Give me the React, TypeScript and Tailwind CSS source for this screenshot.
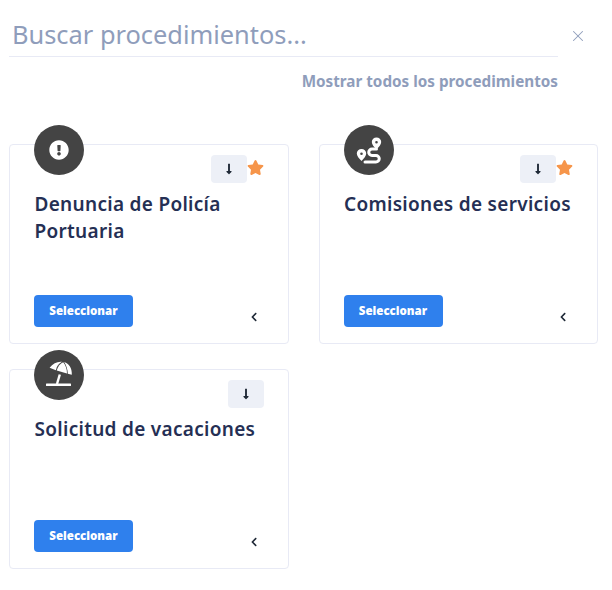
import { FaExclamationCircle, FaLongArrowAltDown, FaStar, FaChevronLeft } from 'react-icons/fa';
import { X } from 'lucide-react';
import type { ReactNode } from 'react';

type Procedure = { id: number; title: ReactNode; icon: ReactNode; favorite: boolean };

function RouteIcon() {
  return (
    <svg viewBox="-1 0 30 34" className="h-[34px] w-[30px]" fill="none">
      <path d="M21.5 16H17a3.2 3.2 0 0 0 0 6.5H21a3.2 3.2 0 0 1 0 6.5H10" stroke="white" strokeWidth="3" strokeLinecap="round" />
      <path fillRule="evenodd" fill="white" d="M6.5 28C4 25.5 1.8 23 1.8 20.6a4.7 4.7 0 0 1 9.4 0C11.2 23 9 25.5 6.5 28ZM6.5 19.4a1.3 1.3 0 1 0 0 2.6a1.3 1.3 0 0 0 0-2.6Z" />
      <path fillRule="evenodd" fill="white" d="M21.5 16.5C19 14 16.8 11.5 16.8 9.1a4.7 4.7 0 0 1 9.4 0C26.2 11.5 24 14 21.5 16.5ZM21.5 7.9a1.3 1.3 0 1 0 0 2.6a1.3 1.3 0 0 0 0-2.6Z" />
    </svg>
  );
}

function BeachIcon() {
  return (
    <svg viewBox="0 3 34 34" className="h-[34px] w-[34px]" fill="white">
      <rect x="4" y="28.5" width="25" height="2.6" rx="0.5" />
      <path d="M15 29L17.8 19.5" stroke="white" strokeWidth="2.4" fill="none" />
      <path d="M7.6 12.8C10.8 8.4 15.8 6.2 20 6.8C16.8 8.4 14.8 11 13.9 15.3Z" />
      <path d="M14.7 15.5C15.8 11.4 18.2 8.2 21.2 7.2C23.6 10 25 13.8 25 18.4Z" />
      <path d="M22.2 6.9C27 8.2 30.2 13.4 29.8 19.8L25.8 18.7C25.8 14.6 24.4 10.4 22.2 6.9Z" />
    </svg>
  );
}

const procedures: Procedure[] = [
  { id: 1, title: <>Denuncia de Policía<br />Portuaria</>, icon: <FaExclamationCircle className="h-[20px] w-[20px]" />, favorite: true },
  { id: 2, title: 'Comisiones de servicios', icon: <RouteIcon />, favorite: true },
  { id: 3, title: 'Solicitud de vacaciones', icon: <BeachIcon />, favorite: false },
];

function ProcedureCard({ procedure }: { procedure: Procedure }) {
  return (
    <div className="relative flex h-[200px] flex-col rounded border border-[#e8eaf5] bg-white px-[24px]">
      {/* Icon badge sticks out of the card */}
      <div className="absolute -top-[20px] left-[24px] flex h-[50px] w-[50px] items-center justify-center rounded-full bg-[#444444] text-white">
        {procedure.icon}
      </div>

      <div className="mt-[10px] flex h-[28px] items-center justify-end">
        <button className="flex h-[28px] w-[36px] items-center justify-center rounded bg-[#edf0f7] text-[#1f2937]">
          <FaLongArrowAltDown className="h-[12px] w-[12px]" />
        </button>
        {procedure.favorite && <FaStar className="mb-[3px] h-[17px] w-[17px] text-[#f6954a]" />}
      </div>

      <h3 className="mt-[8px] h-[54px] pl-[0.5px] text-[19px] leading-[27px] font-semibold tracking-[0.3px] text-[#252f54]">{procedure.title}</h3>

      <div className="mt-[50px] flex items-start justify-between">
        <button className="flex h-[32px] w-[99px] items-center justify-center rounded bg-[#2f80ed] text-[11.5px] font-black text-white">
          Seleccionar
        </button>
        <FaChevronLeft className="mt-[17px] mr-[5px] h-[10px] w-[10px] text-[#1f2937]" />
      </div>
    </div>
  );
}

export default function App() {
  return (
    <div className="h-[590px] w-[612px] bg-white pt-[14px] pl-[9px] pr-[14px] font-['Noto_Sans',sans-serif]">
      <div className="flex items-start">
        <div className="w-[549px] border-b border-[#e8eaf5] pb-[1px]">
          <div className="pl-[3px] text-[25.4px] leading-[41px] text-[#8f9dbb]">Buscar procedimientos...</div>
        </div>
        <X className="mt-[13px] ml-[11px] h-[18px] w-[18px] text-[#8f9dbb]" strokeWidth={1.4} />
      </div>
      <div className="mt-[14px] w-[549px] text-right text-[15.25px] leading-[20px] font-bold text-[#8f9dbb]">
        Mostrar todos los procedimientos
      </div>
      <div className="mt-[53px] grid grid-cols-2 gap-x-[30px] gap-y-[25px]">
        {procedures.map((p) => (
          <ProcedureCard key={p.id} procedure={p} />
        ))}
      </div>
    </div>
  );
}
